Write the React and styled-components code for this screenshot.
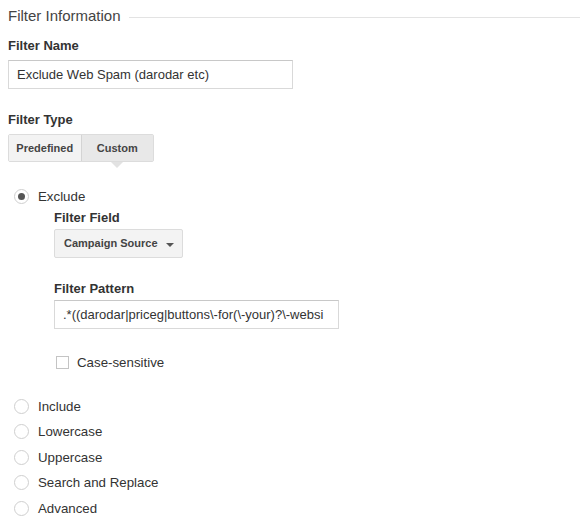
import React, { useState } from 'react'
import styled, { createGlobalStyle } from 'styled-components'

const GlobalStyle = createGlobalStyle`
    html, body {
        margin: 0;
        padding: 0;
        background: #fff;
    }
    body {
        font-family: "Liberation Sans", Arial, sans-serif;
        color: #333;
    }
`

const otherTypes = ["Include", "Lowercase", "Uppercase", "Search and Replace", "Advanced"]

export default function App() {
    const [type, setType] = useState("Exclude")
    const [tab, setTab] = useState("custom")
    const [caseSensitive, setCaseSensitive] = useState(false)

    return (
        <Page>
            <GlobalStyle />
            <Legend>
                <LegendText>Filter Information</LegendText>
                <LegendLine />
            </Legend>

            <Label>Filter Name</Label>
            <TextInput width={285} defaultValue="Exclude Web Spam (darodar etc)" />

            <Label top={23}>Filter Type</Label>
            <Tabs>
                <Tab active={tab === "predefined"} onClick={() => setTab("predefined")}>Predefined</Tab>
                <Tab active={tab === "custom"} onClick={() => setTab("custom")}>Custom</Tab>
            </Tabs>

            <RadioList>
                <RadioRow onClick={() => setType("Exclude")}>
                    <Radio checked={type === "Exclude"} />
                    <RadioLabel>Exclude</RadioLabel>
                </RadioRow>
                <Indented>
                    <Label top={0} bottom={3}>Filter Field</Label>
                    <Select>
                        Campaign Source
                        <Caret />
                    </Select>

                    <Label top={23} bottom={3}>Filter Pattern</Label>
                    <TextInput width={285} defaultValue=".*((darodar|priceg|buttons\-for(\-your)?\-websi" />

                    <CheckRow onClick={() => setCaseSensitive(!caseSensitive)}>
                        <Checkbox checked={caseSensitive} />
                        <RadioLabel>Case-sensitive</RadioLabel>
                    </CheckRow>
                </Indented>

                <Others>
                    {otherTypes.map(t => (
                        <RadioRow key={t} onClick={() => setType(t)}>
                            <Radio checked={type === t} />
                            <RadioLabel>{t}</RadioLabel>
                        </RadioRow>
                    ))}
                </Others>
            </RadioList>
        </Page>
    )
}

const Page = styled.div`
    padding: 7px 0 0 8px;
    width: 572px;
`
const Legend = styled.div`
    display: flex;
    align-items: center;
    gap: 8px;
`
const LegendText = styled.div`
    font-size: 15px;
    color: #444;
    line-height: 18px;
`
const LegendLine = styled.div`
    flex: 1;
    height: 1px;
    background: #e3e3e3;
    margin-top: 2px;
`
const Label = styled.div`
    font-size: 13px;
    font-weight: bold;
    color: #333;
    line-height: 16px;
    margin-top: ${({ top }) => top ?? 13}px;
    margin-bottom: ${({ bottom }) => bottom ?? 6}px;
`
const TextInput = styled.input`
    box-sizing: border-box;
    width: ${({ width }) => width}px;
    height: 29px;
    border: 1px solid #d9d9d9;
    border-top-color: #c8c8c8;
    padding: 0 8px;
    font-family: "Liberation Sans", Arial, sans-serif;
    font-size: 13px;
    color: #333;
    outline: none;
    display: block;
`
const Tabs = styled.div`
    display: flex;
    width: 146px;
    height: 28px;
    box-sizing: border-box;
    border: 1px solid #dcdcdc;
    border-radius: 2px;
`
const Tab = styled.div`
    position: relative;
    flex: 1;
    display: flex;
    align-items: center;
    justify-content: center;
    font-size: 11px;
    font-weight: bold;
    color: #444;
    cursor: pointer;
    background: ${({ active }) => active ? "#e8e8e8" : "#f3f3f3"};
    & + & {
        border-left: 1px solid #d4d4d4;
    }
    &::after {
        content: "";
        display: ${({ active }) => active ? "block" : "none"};
        position: absolute;
        left: 50%;
        bottom: -7px;
        margin-left: -6px;
        border-left: 6px solid transparent;
        border-right: 6px solid transparent;
        border-top: 6px solid #e2e2e2;
    }
`
const RadioList = styled.div`
    margin-top: 22px;
    padding-left: 6px;
`
const RadioRow = styled.div`
    display: flex;
    align-items: center;
    height: 25.5px;
    cursor: pointer;
`
const Radio = styled.span`
    box-sizing: border-box;
    width: 15px;
    height: 15px;
    border-radius: 50%;
    border: 1px solid #cfcfcf;
    background: #fff;
    margin-right: 9px;
    position: relative;
    flex-shrink: 0;
    &::after {
        content: "";
        display: ${({ checked }) => checked ? "block" : "none"};
        position: absolute;
        left: 3px;
        top: 3px;
        width: 7px;
        height: 7px;
        border-radius: 50%;
        background: #555;
    }
`
const RadioLabel = styled.span`
    font-size: 13.3px;
    color: #333;
`
const Indented = styled.div`
    padding-left: 40px;
`
const Select = styled.div`
    box-sizing: border-box;
    width: 129px;
    height: 29px;
    border: 1px solid #dcdcdc;
    background: #f3f3f3;
    border-radius: 2px;
    display: flex;
    align-items: center;
    padding-left: 9px;
    font-size: 11px;
    font-weight: bold;
    color: #444;
    position: relative;
`
const Caret = styled.span`
    position: absolute;
    right: 8px;
    top: 13px;
    border-left: 4px solid transparent;
    border-right: 4px solid transparent;
    border-top: 4px solid #555;
`
const CheckRow = styled.div`
    display: flex;
    align-items: center;
    margin-top: 26px;
    padding-left: 2px;
    cursor: pointer;
`
const Checkbox = styled.span`
    box-sizing: border-box;
    width: 13px;
    height: 13px;
    border: 1px solid #c4c4c4;
    background: ${({ checked }) => checked ? "#555" : "#fff"};
    margin-right: 8px;
`
const Others = styled.div`
    margin-top: 24px;
`
